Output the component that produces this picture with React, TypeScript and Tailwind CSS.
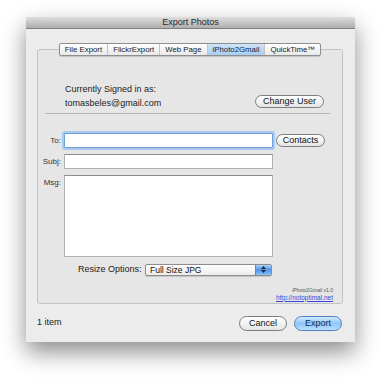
import React from "react";

const tabs = ["File Export", "FlickrExport", "Web Page", "iPhoto2Gmail", "QuickTime™"];

function AquaButton({
  label,
  width,
  height = "h-[13px]",
  primary,
}: {
  label: string;
  width: string;
  height?: string;
  primary?: boolean;
}) {
  return (
    <button
      type="button"
      className={`${width} ${height} flex items-center justify-center rounded-full border text-[9px] leading-none ${
        primary
          ? "border-[#4f7fc0] bg-gradient-to-b from-[#d3ebff] via-[#8ec6f6] to-[#b9e0ff] text-[#0d2a52]"
          : "border-[#7d7d7d] bg-gradient-to-b from-white via-[#f3f3f3] to-[#e4e4e4] text-[#111]"
      }`}
    >
      {label}
    </button>
  );
}

export default function App() {
  return (
    <div
      className="h-[379px] w-[380px] overflow-hidden bg-white pl-[26px] pt-[17px]"
      style={{ fontFamily: '"Liberation Sans", Arial, sans-serif' }}
    >
      <div className="flex h-[325px] w-[329px] flex-col bg-[#ececec] shadow-[0_10px_22px_rgba(0,0,0,0.45)]">
        {/* Title bar */}
        <div className="flex h-[12px] items-center justify-center border-b border-[#7f7f7f] bg-gradient-to-b from-[#dedede] to-[#aeaeae] text-[9px] leading-none text-[#2a2a2a]">
          Export Photos
        </div>

        <div className="pl-[11px] pr-[12px] pt-[14px]">
          {/* Tabs */}
          <div className="relative z-10 -mb-[7px] flex justify-center">
            <div className="flex h-[13px] overflow-hidden rounded-[2px] border border-[#8e8e8e] bg-gradient-to-b from-white to-[#e9e9e9] shadow-[0_1px_1px_rgba(0,0,0,0.15)]">
              {tabs.map((t, i) => (
                <div
                  key={t}
                  className={`flex items-center px-[5px] text-[7.8px] leading-none ${
                    i > 0 ? "border-l border-[#c4c4c4]" : ""
                  } ${
                    t === "iPhoto2Gmail"
                      ? "bg-gradient-to-b from-[#cfe4fa] to-[#a9cdf3] text-[#0b1f3d]"
                      : "text-[#1a1a1a]"
                  }`}
                >
                  {t}
                </div>
              ))}
            </div>
          </div>

          {/* Group box */}
          <div className="flex h-[255px] flex-col rounded-[3px] border border-[#c3c3c3] bg-[#e6e6e6] text-[9px] text-[#1c1c1c]">
            <div className="mt-[32px] flex items-end pl-[27px] pr-[18px]">
              <div className="flex-1 leading-[14px]">
                <div>Currently Signed in as:</div>
                <div>tomasbeles@gmail.com</div>
              </div>
              <div className="mb-[2px]">
                <AquaButton label="Change User" width="w-[69px]" />
              </div>
            </div>

            <div className="ml-[7px] mr-[12px] mt-[3px] h-px bg-[#b5b5b5]" />

            {/* To */}
            <div className="mt-[19px] flex items-center">
              <div className="w-[24px] pr-px text-right text-[8px] text-[#333]">To:</div>
              <div className="ml-[2px] h-[15px] w-[209px] rounded-[1px] border border-[#6f9fd6] bg-white shadow-[0_0_0_2px_#a9c9ef]" />
              <div className="ml-[3px]">
                <AquaButton label="Contacts" width="w-[49px]" />
              </div>
            </div>

            {/* Subj */}
            <div className="mt-[6px] flex items-center">
              <div className="w-[24px] pr-px text-right text-[8px] text-[#333]">Subj:</div>
              <div className="ml-[2px] h-[15px] w-[209px] border border-[#b0b0b0] border-t-[#8c8c8c] bg-white" />
            </div>

            {/* Msg */}
            <div className="mt-[6px] flex items-start">
              <div className="mt-[2px] w-[24px] pr-px text-right text-[8px] text-[#333]">Msg:</div>
              <div className="ml-[2px] h-[82px] w-[209px] border border-[#b0b0b0] border-t-[#8c8c8c] bg-white" />
            </div>

            {/* Resize */}
            <div className="mt-[6px] flex items-center pl-[40px]">
              <div className="w-[67px] text-[9px] text-[#222]">Resize Options:</div>
              <div className="flex h-[12px] w-[127px] overflow-hidden rounded-[2px] border border-[#8d8d8d] bg-gradient-to-b from-white to-[#ececec] shadow-[0_1px_1px_rgba(0,0,0,0.15)]">
                <div className="flex flex-1 items-center pl-[4px] text-[8.5px] leading-none text-[#111]">
                  Full Size JPG
                </div>
                <div className="flex w-[16px] flex-col items-center justify-center gap-[1px] border-l border-[#5a85c0] bg-gradient-to-b from-[#a6d0f8] via-[#4f94e3] to-[#8cc3f6]">
                  <svg width="5" height="3" viewBox="0 0 5 3">
                    <path d="M0 3 L2.5 0 L5 3 Z" fill="#1a2b44" />
                  </svg>
                  <svg width="5" height="3" viewBox="0 0 5 3">
                    <path d="M0 0 L2.5 3 L5 0 Z" fill="#1a2b44" />
                  </svg>
                </div>
              </div>
            </div>

            {/* Version */}
            <div className="mt-[9px] flex flex-col items-end pr-[9px] leading-[8px]">
              <div className="text-[5px] text-[#555]">iPhoto2Gmail v1.0</div>
              <div className="text-[6.5px] text-[#3b46d6] underline">http://notoptimal.net</div>
            </div>
          </div>
        </div>

        {/* Bottom bar */}
        <div className="flex flex-1 items-center pl-[11px] pr-[13px]">
          <div className="flex-1 text-[9px] text-[#222]">1 item</div>
          <div className="flex gap-[7px]">
            <AquaButton label="Cancel" width="w-[48px]" height="h-[15px]" />
            <AquaButton label="Export" width="w-[48px]" height="h-[15px]" primary />
          </div>
        </div>
      </div>
    </div>
  );
}
